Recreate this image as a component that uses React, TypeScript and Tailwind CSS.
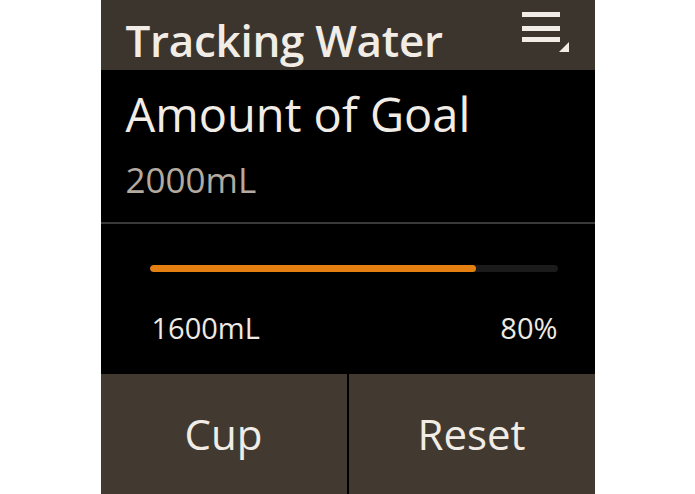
export default function App() {
    const goal = 2000;
    const current = 1600;
    const percent = Math.round((current / goal) * 100);

    return (
        <div className="w-full h-[494px] bg-white flex justify-center" style={{ fontFamily: '"Open Sans", "Noto Sans", sans-serif' }}>
            <div className="w-[494px] h-[494px] flex flex-col bg-black">
                {/* Header */}
                <div className="h-[70px] shrink-0 bg-[#3c352e] flex items-center justify-between pt-[10px] pl-[25px] pr-[26px]">
                    <span className="text-[44px] leading-none font-semibold text-[#f1ede6] tracking-[-0.3px]">Tracking Water</span>
                    <svg width="48" height="48" viewBox="0 0 48 48" className="-mt-[8px]">
                        <rect x="1" y="0" width="38" height="5" fill="#f1ede6" />
                        <rect x="1" y="14" width="38" height="5" fill="#f1ede6" />
                        <rect x="1" y="25" width="38" height="5" fill="#f1ede6" />
                        <polygon points="48,30 48,40 38,40" fill="#f1ede6" />
                    </svg>
                </div>

                {/* Goal */}
                <div className="h-[152px] shrink-0 pl-[25px] pt-[21px]">
                    <div className="text-[47px] leading-none text-[#f1ede6]">Amount of Goal</div>
                    <div className="mt-[24px] text-[35px] leading-none text-[#b3aaa0]">{goal}mL</div>
                </div>
                <div className="h-[2px] shrink-0 bg-[#3a3a3a]" />

                {/* Progress */}
                <div className="h-[150px] shrink-0 pl-[49px] pr-[37px] pt-[41px]">
                    <div className="h-[7px] rounded-full bg-[#1b1b1b] overflow-hidden">
                        <div className="h-full rounded-full bg-[#e47f12]" style={{ width: `${percent}%` }} />
                    </div>
                    <div className="mt-[41px] flex justify-between pl-[2px] text-[29px] leading-none text-[#eeeae3]">
                        <span>{current}mL</span>
                        <span>{percent}%</span>
                    </div>
                </div>

                {/* Buttons */}
                <div className="flex-1 flex gap-[2px] bg-black">
                    <button className="flex-1 bg-[#423a31] flex items-center justify-center text-[42px] leading-none text-[#f1ede6]">Cup</button>
                    <button className="flex-1 bg-[#423a31] flex items-center justify-center text-[42px] leading-none text-[#f1ede6]">Reset</button>
                </div>
            </div>
        </div>
    );
}
